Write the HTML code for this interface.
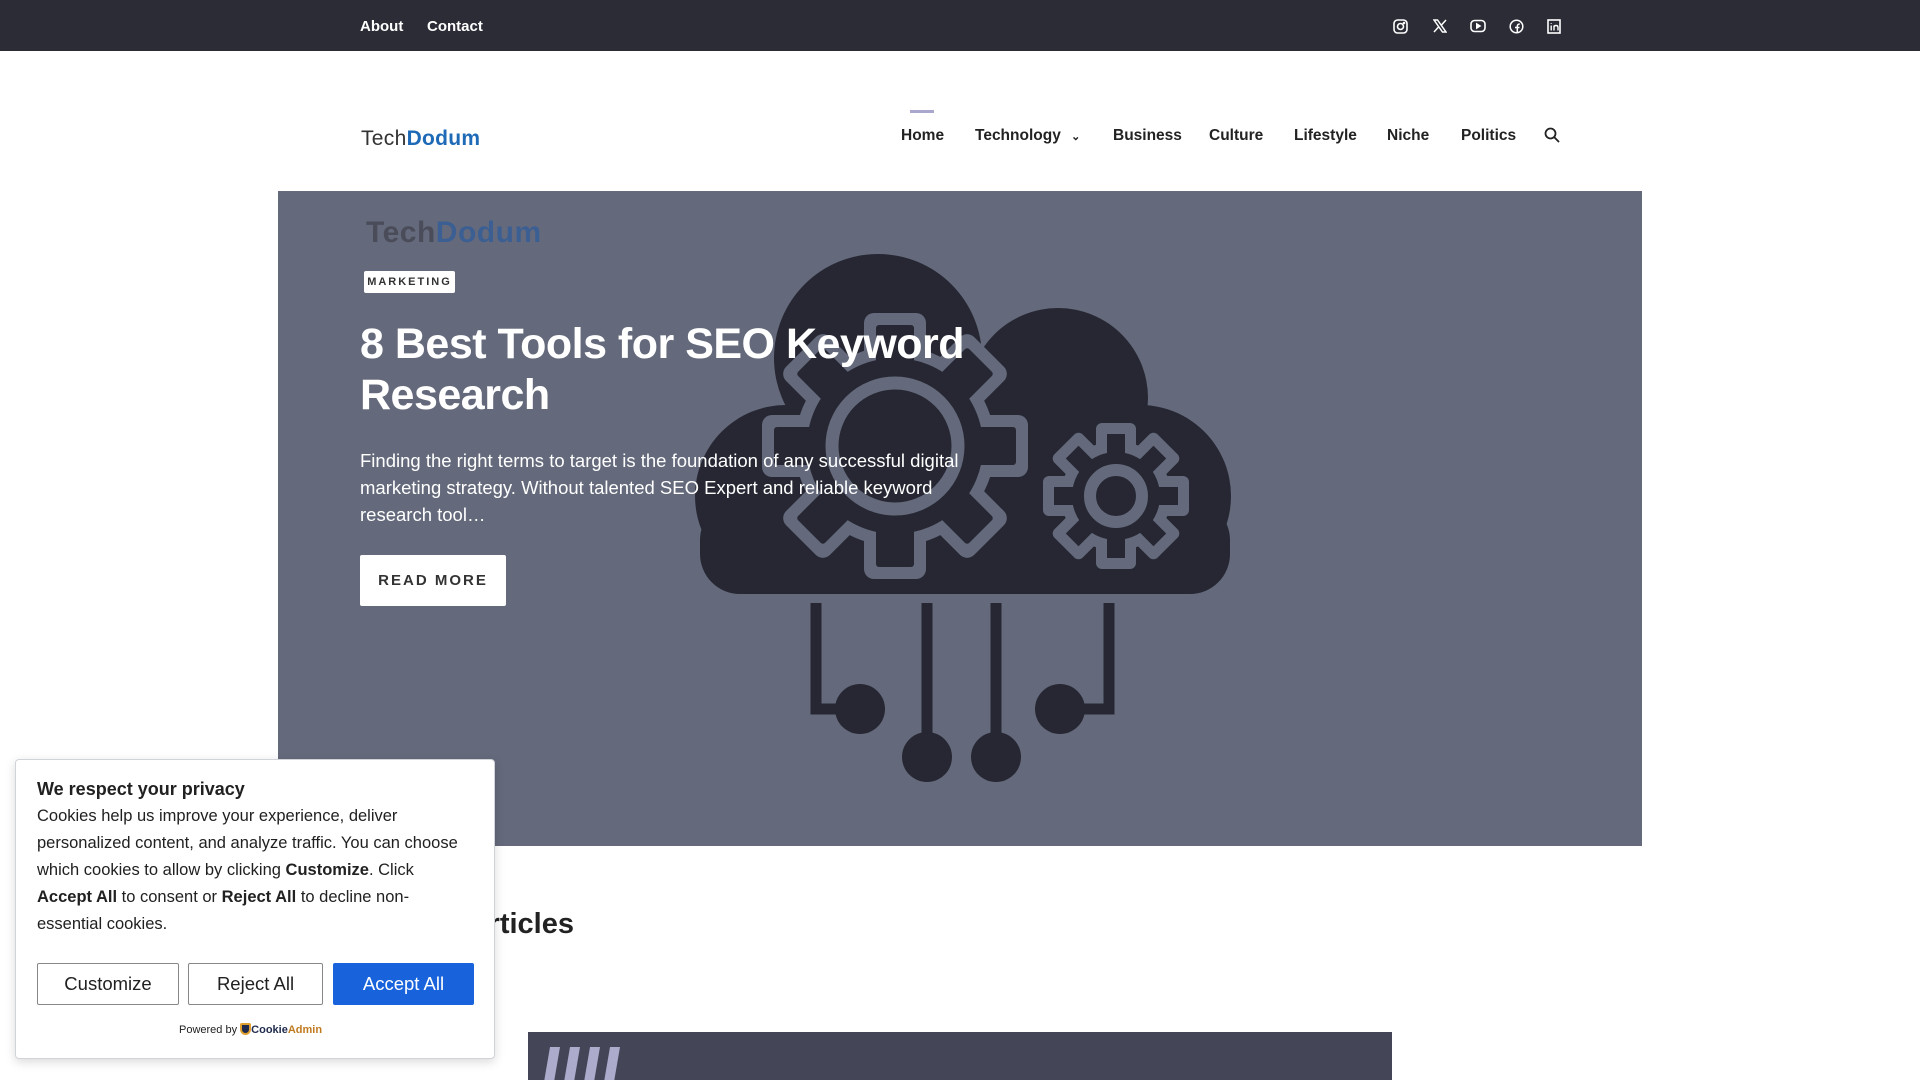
<!DOCTYPE html>
<html><head><meta charset="utf-8"><style>
*{margin:0;padding:0;box-sizing:border-box}
body{width:1920px;height:1080px;overflow:hidden;background:#fff;font-family:"Liberation Sans",sans-serif;position:relative}
.abs{position:absolute}
.top{left:0;top:0;width:1920px;height:51px;background:#2b2c36}
.top a{position:absolute;top:18px;color:#fff;font-size:15px;font-weight:bold;text-decoration:none}
.nav{top:127px;font-size:15.5px;color:#222;font-weight:bold;white-space:nowrap}
.hero{left:278px;top:191px;width:1364px;height:655px;background:#646a7b;overflow:hidden}
</style></head><body>
<div class="abs top">
<a style="left:360px">About</a><a style="left:427px">Contact</a>
<svg class="abs" style="left:1393px;top:19px" width="15" height="15" viewBox="0 0 15 15" fill="none" stroke="#fff" stroke-width="1.6"><rect x="1" y="1" width="13" height="13" rx="3.5"/><circle cx="7.5" cy="7.5" r="3"/><circle cx="11" cy="4" r=".5" fill="#fff"/></svg>
<svg class="abs" style="left:1433px;top:19px" width="14" height="14" viewBox="0 0 14 14" stroke="#fff" stroke-width="1.5" fill="none"><path d="M1 1h3.5l8.5 12h-3.5z"/><path d="M13 1L8 6.5M1 13l5-5.5"/></svg>
<svg class="abs" style="left:1470px;top:19px" width="16" height="14" viewBox="0 0 16 14" fill="none" stroke="#fff" stroke-width="1.6"><rect x="1" y="1.5" width="14" height="11" rx="3.5"/><path d="M6.5 4.5v5l4-2.5z" fill="#fff" stroke-width="1"/></svg>
<svg class="abs" style="left:1509px;top:19px" width="15" height="15" viewBox="0 0 15 15" fill="none" stroke="#fff" stroke-width="1.5"><circle cx="7.5" cy="7.5" r="6.3"/><path d="M8.3 14V7.5q0-2.5 2.5-2.5M6 8.5h4.5"/></svg>
<svg class="abs" style="left:1547px;top:19px" width="14" height="15" viewBox="0 0 14 15" fill="none" stroke="#fff" stroke-width="1.6"><rect x="1" y="1" width="12" height="13"/><path d="M4.2 6.5v5M4.2 4v.8M7 11.5V6.5M7 8.5q0-2 2-2t2 2v3" stroke-width="1.4"/></svg>
</div>
<div class="abs" style="left:361px;top:127px;font-size:21px;font-weight:bold;letter-spacing:.3px"><span style="color:#333;font-weight:normal">Tech</span><span style="color:#1e6ab7">Dodum</span></div>
<div class="abs" style="left:910px;top:110px;width:24px;height:3px;background:#a9a8cc"></div>
<div class="abs nav" style="left:901px">Home</div>
<div class="abs nav" style="left:975px">Technology <span style="font-size:11px;margin-left:6px">&#8964;</span></div>
<div class="abs nav" style="left:1113px">Business</div>
<div class="abs nav" style="left:1209px">Culture</div>
<div class="abs nav" style="left:1294px">Lifestyle</div>
<div class="abs nav" style="left:1387px">Niche</div>
<div class="abs nav" style="left:1461px">Politics</div>
<svg class="abs" style="left:1544px;top:127px" width="16" height="16" viewBox="0 0 16 16" fill="none" stroke="#222" stroke-width="1.8"><circle cx="6.5" cy="6.5" r="5"/><path d="M10.3 10.3L15 15"/></svg>

<div class="abs hero">
<svg class="abs" style="left:0;top:0" width="1364" height="655" viewBox="278 191 1364 655">
<g fill="#262733">
<circle cx="878" cy="358" r="104"/><circle cx="1058" cy="398" r="90"/><circle cx="786" cy="496" r="91"/><circle cx="1140" cy="496" r="91"/>
<rect x="786" y="400" width="354" height="194" rx="10"/><rect x="700" y="500" width="530" height="94" rx="40"/>
</g>
<g fill="#646a7b">
<g transform="translate(895 446)"><circle r="100"/>
<rect x="-31" y="-133" width="62" height="266" rx="10"/><rect x="-31" y="-133" width="62" height="266" rx="10" transform="rotate(45)"/><rect x="-31" y="-133" width="62" height="266" rx="10" transform="rotate(90)"/><rect x="-31" y="-133" width="62" height="266" rx="10" transform="rotate(135)"/></g>
<g transform="translate(1116 496)"><circle r="55"/>
<rect x="-20" y="-73" width="40" height="146" rx="6"/><rect x="-20" y="-73" width="40" height="146" rx="6" transform="rotate(45)"/><rect x="-20" y="-73" width="40" height="146" rx="6" transform="rotate(90)"/><rect x="-20" y="-73" width="40" height="146" rx="6" transform="rotate(135)"/></g>
</g>
<g fill="#262733">
<g transform="translate(895 446)"><circle r="88"/>
<rect x="-19" y="-121" width="38" height="242" rx="3"/><rect x="-19" y="-121" width="38" height="242" rx="3" transform="rotate(45)"/><rect x="-19" y="-121" width="38" height="242" rx="3" transform="rotate(90)"/><rect x="-19" y="-121" width="38" height="242" rx="3" transform="rotate(135)"/></g>
<g transform="translate(1116 496)"><circle r="44"/>
<rect x="-9" y="-62" width="18" height="124"/><rect x="-9" y="-62" width="18" height="124" transform="rotate(45)"/><rect x="-9" y="-62" width="18" height="124" transform="rotate(90)"/><rect x="-9" y="-62" width="18" height="124" transform="rotate(135)"/></g>
</g>
<circle cx="895" cy="446" r="63" fill="none" stroke="#646a7b" stroke-width="13"/>
<circle cx="1116" cy="496" r="26" fill="none" stroke="#646a7b" stroke-width="12"/>
<g stroke="#262733" stroke-width="11" fill="none"><path d="M816 603v106h40M927 603v150M996 603v150M1109 603v106h-40"/></g>
<g fill="#262733"><circle cx="860" cy="709" r="25"/><circle cx="927" cy="757" r="25"/><circle cx="996" cy="757" r="25"/><circle cx="1060" cy="709" r="25"/></g>
</svg>
<div class="abs" style="left:88px;top:25px;font-size:30px;font-weight:bold;letter-spacing:.5px"><span style="color:#4a4c5a">Tech</span><span style="color:#3c5f93">Dodum</span></div>
<div class="abs" style="left:86px;top:80px;width:91px;height:22px;background:#fff;border-radius:2px;font-size:11px;font-weight:bold;letter-spacing:2px;color:#333;text-align:center;line-height:22px">MARKETING</div>
<div class="abs" style="left:82px;top:128px;width:700px;font-size:43px;font-weight:bold;color:#fff;line-height:51px;letter-spacing:-.5px">8 Best Tools for SEO Keyword Research</div>
<div class="abs" style="left:82px;top:256px;width:640px;font-size:18.5px;color:#fff;line-height:27px">Finding the right terms to target is the foundation of any successful digital marketing strategy. Without talented SEO Expert and reliable keyword research tool…</div>
<div class="abs" style="left:82px;top:364px;width:146px;height:51px;background:#fff;border-radius:2px;font-size:15px;font-weight:bold;letter-spacing:2px;color:#333;text-align:center;line-height:51px">READ MORE</div>
</div>

<div class="abs" style="left:274px;width:300px;top:908px;text-align:right;font-size:29px;font-weight:bold;color:#222">Latest Articles</div>
<div class="abs" style="left:528px;top:1032px;width:864px;height:48px;background:#444557;overflow:hidden">
<svg width="120" height="48"><g fill="#acabcc"><path d="M22 15h10l-6 35h-10zM42 15h10l-6 35h-10zM62 15h10l-6 35h-10zM82 15h10l-6 35h-10z"/></g></svg>
</div>

<div class="abs" style="left:15px;top:759px;width:480px;height:300px;background:#fff;border:1px solid #d0d3d8;border-radius:4px;box-shadow:0 3px 10px rgba(0,0,0,.15)">
<div class="abs" style="left:21px;top:19px;font-size:18px;font-weight:bold;color:#212121">We respect your privacy</div>
<div class="abs" style="left:21px;top:43px;width:422px;font-size:16.5px;line-height:27px;color:#212121">Cookies help us improve your experience, deliver personalized content, and analyze traffic. You can choose which cookies to allow by clicking <b>Customize</b>. Click <b>Accept All</b> to consent or <b>Reject All</b> to decline non-essential cookies.</div>
<div class="abs" style="left:21px;top:203px;width:142px;height:42px;border:1.5px solid #888;border-radius:2px;font-size:18.5px;text-align:center;line-height:39px;color:#212121">Customize</div>
<div class="abs" style="left:172px;top:203px;width:135px;height:42px;border:1.5px solid #888;border-radius:2px;font-size:18.5px;text-align:center;line-height:39px;color:#212121">Reject All</div>
<div class="abs" style="left:317px;top:203px;width:141px;height:42px;background:#1863dc;border:1.5px solid #1863dc;border-radius:2px;font-size:18.5px;text-align:center;line-height:39px;color:#fff">Accept All</div>
<div class="abs" style="left:163px;top:263px;font-size:11px;color:#222;white-space:nowrap">Powered by <span style="display:inline-block;width:11px;height:12px;background:#1f2b4d;border-radius:2px 2px 6px 6px;vertical-align:-2px;border:2px solid #e0a030"></span><b style="color:#1f2b4d">Cookie</b><b style="color:#c07a20">Admin</b></div>
</div>
</body></html>
